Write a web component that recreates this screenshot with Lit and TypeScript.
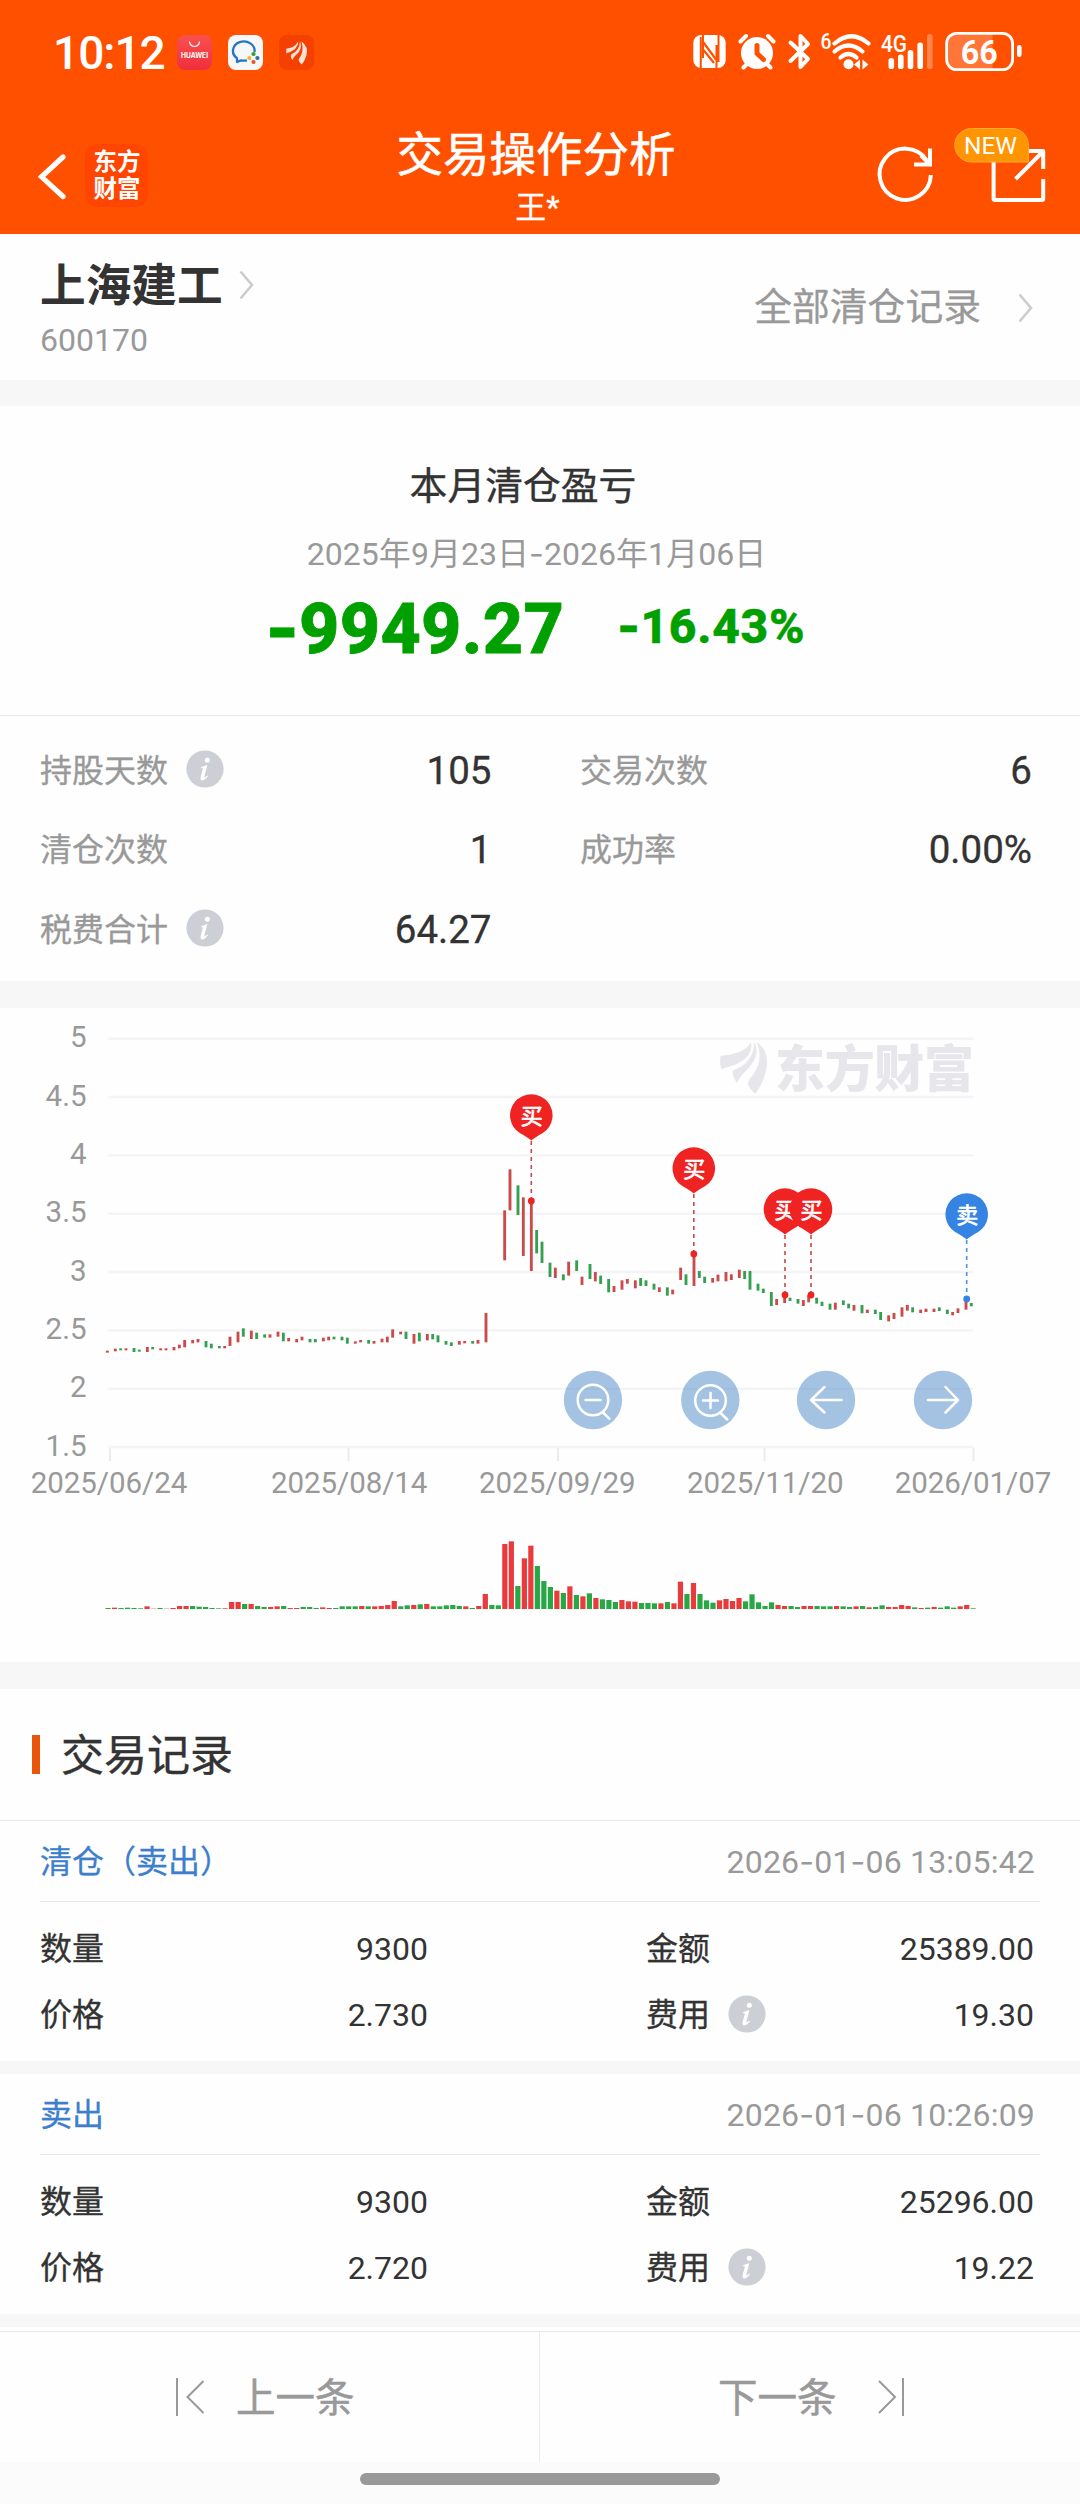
import { LitElement, html, css, svg } from "lit";
import { customElement, property } from "lit/decorators.js";

const FONT = css`Roboto, "Noto Sans CJK SC", sans-serif`;

/* Splits a string on hyphens so each one can be set in a wider face. */
const dashed = (text: string) =>
  text.split("-").map((part, i) => (i ? html`<span class="dash">-</span>${part}` : part));

const dashStyle = css`
  .dash { font-family: Inter, sans-serif; }
`;

/* One entry per trading day: colour, top, bottom (thirds of a pixel from the chart's 1020 line). */
const PRICES =
  "r992,998 r986,994 g985,991 r985,991 g984,996 g989,995 r981,996 g981,988 r985,991 r985,991 r981,991 r974,985 r960,982 r960,970 r957,967 g963,982 g971,985 g978,985 r978,985 r950,978 r935,967 g925,950 r932,957 g938,957 g943,953 r943,953 r935,950 g938,964 r954,964 r957,967 r950,961 g957,967 g957,967 r953,964 r950,961 g950,958 g950,961 g953,971 r964,971 r960,967 g960,971 r963,971 r956,967 r950,967 r928,953 r935,943 g935,957 r942,971 g938,964 r942,961 g942,958 g946,967 g963,974 g967,978 r963,974 r963,970 g963,971 r960,971 r879,967 r0,0 r0,0 r571,721 r448,571 g496,585 r532,708 r543,753 g630,700 g665,729 g728,771 r743,774 g763,781 r725,767 g721,753 r770,795 g732,777 r756,784 g767,792 g777,817 r798,816 r781,809 r777,791 r781,805 g774,798 g781,798 g791,809 r802,816 g802,827 r809,823 r743,780 g763,795 r703,798 g753,774 g770,789 r774,788 r764,784 r756,784 r763,780 r749,774 g753,777 g753,809 g791,812 g806,819 g816,858 r837,855 r825,849 g833,843 g837,851 r840,858 r825,847 g833,851 g845,858 g851,869 r848,869 g841,855 g851,865 r855,872 g855,880 r869,879 g869,882 g876,900 r886,904 r879,897 r862,890 r855,872 g862,877 r869,879 r866,876 r866,876 g862,873 g869,882 r876,886 r865,879 r845,869 g849,859";

/* One entry per trading day: colour and bar height in thirds of a pixel. */
const VOLUMES =
  "g3 r4 g3 g4 g3 g2 r8 r1 g3 r1 r3 r9 r9 g9 g7 g6 g3 g2 r2 r21 r21 g15 r15 g9 g6 r6 r8 g9 r3 r3 g6 g6 g3 r5 r3 g3 g8 g8 g8 r9 g8 r8 r9 r12 r24 g8 g11 r12 g14 r15 g8 g8 g11 g12 g9 r8 g3 r9 r45 g12 g11 r195 r203 g69 r152 r190 g129 g84 g66 r55 g48 r68 g42 r38 g47 r33 g29 g27 g21 r27 r23 r22 g18 g18 g17 r17 g21 r17 r82 g45 r78 g45 g26 g19 r26 r30 r24 r33 g23 g44 g20 g9 g20 r12 r9 g9 g6 r9 r9 g9 g8 g8 r9 g8 g6 r8 g9 r5 g6 g11 r6 r6 r12 r9 g5 r3 g4 r6 g4 g8 g4 r8 r12 g2";

const MARKS = [
  { x: 531.3, y: 1116, dot: 1201, label: "买", kind: "buy" },
  { x: 693.8, y: 1169, dot: 1254, label: "买", kind: "buy" },
  { x: 785, y: 1210, dot: 1295, label: "买", kind: "buy" },
  { x: 811, y: 1210, dot: 1295, label: "买", kind: "buy" },
  { x: 966.7, y: 1215, dot: 1299, label: "卖", kind: "sell" },
];

@customElement("info-dot")
export class InfoDot extends LitElement {
  static styles = css`
    :host { display: block; width: 38px; height: 38px; flex: none; }
    svg { display: block; }
  `;
  render() {
    return html`<svg width="38" height="38" viewBox="0 0 38 38">
      <circle cx="19" cy="19" r="18.6" fill="#ccd0d6" />
      <circle cx="21.3" cy="10.3" r="2.5" fill="#fff" />
      <path d="M15 17.2 L21.4 15 L18.4 26.4 Q18 28.8 21.4 25.6 L22 26.2 Q18 31 15.8 30.4 Q14 29.6 14.8 26.4 L16.8 19 Q17 17.8 15.2 18.2 Z" fill="#fff" />
    </svg>`;
  }
}

@customElement("status-bar")
export class StatusBar extends LitElement {
  static styles = css`
    :host { display: flex; align-items: center; height: 104px; padding: 0 56px 0 53px; font-family: ${FONT}; color: #fff; }
    .time { font-size: 46px; line-height: 1; font-weight: 500; width: 124px; letter-spacing: -1px; margin-top: 2px; }
    .apps { display: flex; gap: 16px; }
    svg { display: block; }
    .right { margin-left: auto; }
    .right text { font-family: ${FONT}; fill: #fff; }
  `;
  render() {
    return html`
      <div class="time">10:12</div>
      <div class="apps">
        <svg width="35" height="35" viewBox="0 0 35 35">
          <defs><linearGradient id="hw" x1="0" y1="0" x2="0" y2="1"><stop offset="0" stop-color="#fa5050" /><stop offset="1" stop-color="#ee2f3c" /></linearGradient></defs>
          <rect width="35" height="35" rx="8" fill="url(#hw)" />
          <path d="M12.5 6.5 a5 5 0 0 0 10 0" fill="none" stroke="#fff" stroke-width="1.2" />
          <text x="17.5" y="22.5" font-size="7" font-weight="700" font-family="Inter, sans-serif" text-anchor="middle" textLength="27" lengthAdjust="spacingAndGlyphs" fill="#fff">HUAWEI</text>
        </svg>
        <svg width="35" height="35" viewBox="0 0 35 35">
          <rect width="35" height="35" rx="8" fill="#f7f7f7" />
          <path d="M26.5 17 A10.8 9.4 0 1 0 9 23.2 L9 27 L13 25.4 Q16 26 19 25.4" fill="none" stroke="#2476c4" stroke-width="2.3" stroke-linejoin="round" />
          <circle cx="25.5" cy="19" r="2.1" fill="#3a9b35" /><circle cx="29.4" cy="23" r="2.1" fill="#2370bb" />
          <circle cx="25.5" cy="27" r="2.1" fill="#e2572b" /><circle cx="21.4" cy="23" r="2.1" fill="#f2b632" />
        </svg>
        <svg width="35" height="35" viewBox="0 0 35 35">
          <rect width="35" height="35" rx="8" fill="#f44000" />
          <path d="M7.2 13.8 Q15 13.4 19.3 6.6 Q19.4 14.6 7.4 18.6 Z M21 6.3 Q24 14 17.5 19.5 Q14 22.2 13.5 25 Q11 22 12.2 19.6 Q20.5 16 21 6.3 Z M22.6 6.5 Q30 12 27.4 20.5 Q25.5 26.5 22.8 29.6 Q19.2 26.5 19.8 24.3 Q25.5 17 22.6 6.5 Z" fill="#fde3d6" />
        </svg>
      </div>
      <svg class="right" width="334" height="44" viewBox="690 30 334 44">
        <rect x="693.3" y="35" width="32.4" height="33" rx="8" fill="#fff" />
        <path d="M703 35 V58 M700.8 37 V68 M716.5 45 V68 M718.5 35 V62" stroke="#ff5000" stroke-width="2" fill="none" />
        <path d="M703.5 42.5 L716 59.5 M703.5 50 L714 63" stroke="#ff5000" stroke-width="2.2" />
        <g fill="#fff" stroke="#fff">
          <circle cx="757" cy="53" r="16" stroke="none" />
          <path d="M740.5 41.5 L746 36 M773.5 41.5 L768 36 M747 64 L743.5 67.5 M767 64 L770.5 67.5" stroke-width="4" stroke-linecap="round" fill="none" />
        </g>
        <path d="M757 45.5 V53.5 L763.5 59.5" fill="none" stroke="#ff5000" stroke-width="5" stroke-linecap="round" stroke-linejoin="round" />
        <path d="M790.5 42.5 L808 59 L800.5 67 V36 L808 44 L790.5 61" fill="none" stroke="#fff" stroke-width="4" stroke-linecap="round" stroke-linejoin="round" />
        <text x="820.5" y="49" font-size="22" font-weight="500" textLength="11" lengthAdjust="spacingAndGlyphs">6</text>
        <g fill="none" stroke="#fff" stroke-width="4.2" stroke-linecap="round">
          <path d="M834.5 43.5 Q851.5 29 868.5 43.5" /><path d="M834.5 51.5 Q848.5 39.5 862.5 51.5" /><path d="M840.5 57.5 Q848.5 50.5 856.5 57.5" />
        </g>
        <circle cx="848.5" cy="64.3" r="5" fill="#fff" />
        <path d="M854 64.5 L860 59.5 V69.5 Z M868.5 64.5 L862.5 59.5 V69.5 Z" fill="#fff" />
        <text x="881" y="51.5" font-size="23.5" font-weight="500" textLength="26" lengthAdjust="spacingAndGlyphs">4G</text>
        <g fill="#fff">
          <rect x="888.5" y="58" width="5.6" height="11" rx="2.6" /><rect x="898" y="54.5" width="5.6" height="14.5" rx="2.6" />
          <rect x="907.7" y="50" width="5.6" height="19" rx="2.6" /><rect x="917.4" y="42.5" width="5.6" height="26.5" rx="2.6" />
          <rect x="927" y="34" width="5.6" height="35" rx="2.6" opacity=".3" />
          <path d="M955 34.5 H992.5 V69 H955 Q947 69 947 61 V42.5 Q947 34.5 955 34.5 Z" opacity=".22" />
          <rect x="1017" y="45" width="4.6" height="12" rx="2.2" />
        </g>
        <rect x="946.6" y="33.4" width="66" height="36.2" rx="10" fill="none" stroke="#fff" stroke-width="2.8" />
        <text x="979.3" y="64" font-size="33" font-weight="700" text-anchor="middle" textLength="37" lengthAdjust="spacingAndGlyphs">66</text>
      </svg>
    `;
  }
}

@customElement("title-bar")
export class TitleBar extends LitElement {
  static styles = css`
    :host { display: grid; grid-template-columns: 1fr 300px 1fr; height: 130px; font-family: ${FONT}; color: #fff; }
    svg { display: block; }
    .left { display: flex; align-items: flex-start; padding: 40px 0 0 38px; gap: 17px; }
    .back { margin-top: 8px; }
    .logo { box-sizing: border-box; width: 63px; height: 63px; border-radius: 13px; background: #ff4500; padding: 5px 0 0 1px; text-align: center; font-weight: 700; font-size: 23.5px; line-height: 26.5px; }
    .mid { text-align: center; line-height: 1; }
    .title { font-size: 46.5px; margin: 28px -10px 0 -18px; -webkit-text-stroke: 0.6px #fff; }
    .sub { font-size: 31px; margin: 13px 5px 0 0; -webkit-text-stroke: 0.3px #fff; }
    .right { display: flex; justify-content: flex-end; padding: 20px 30px 0 0; }
    .right text { font-family: ${FONT}; fill: #fff; }
  `;
  render() {
    return html`
      <div class="left">
        <svg class="back" width="30" height="50" viewBox="38 151 30 50"><path d="M63 156 L41.5 175.8 L63 195.5" fill="none" stroke="#fff" stroke-width="5.2" stroke-linecap="round" /></svg>
        <div class="logo">东方<br />财富</div>
      </div>
      <div class="mid"><div class="title">交易操作分析</div><div class="sub">王*</div></div>
      <div class="right">
        <svg width="180" height="90" viewBox="870 124 180 90">
          <g fill="none" stroke="#fff" stroke-width="4">
            <path d="M930.8 175 A25.6 25.6 0 1 1 926.5 160" /><path d="M930 148.5 V164.4 H914 M921 155.5 L930 164.4" />
            <path d="M993.6 160 V199 Q993.6 200 995 200 H1042 Q1043.2 200 1043.2 199 V179 M1026 151 H1043.2 V169 M1043 151.5 L1015.5 179" stroke-linejoin="round" />
          </g>
          <path d="M971.5 128.5 H1012 A16.5 16.5 0 0 1 1028.5 145 V162 H971.5 A16.7 16.7 0 0 1 971.5 128.5 Z" fill="#ff9500" stroke="#ffa93a" />
          <text x="990.5" y="153.8" font-size="23.5" text-anchor="middle" textLength="53" lengthAdjust="spacingAndGlyphs">NEW</text>
        </svg>
      </div>
    `;
  }
}

@customElement("trade-chart")
export class TradeChart extends LitElement {
  static styles = css`
    :host { display: block; }
    svg { display: block; }
    text { font-family: ${FONT}; }
    .axis { font-size: 29.5px; fill: #999; }
    .grid { stroke: #f4f4f6; stroke-width: 2.4; }
    .tick { stroke: #ececee; stroke-width: 2; }
    .brand { font-weight: 900; font-size: 50px; fill: #e6e6eb; }
    .r { fill: #cb4a4c; }
    .g { fill: #36a052; }
    .vr { fill: #e93a3c; }
    .vg { fill: #28a745; }
    .buy { fill: #f02323; }
    .sell { fill: #3583e2; }
    .buy-line { stroke: #c9484b; }
    .sell-line { stroke: #4f92dd; }
    .mark { fill: #fff; font-size: 22px; stroke: #fff; stroke-width: 0.7px; }
  `;
  render() {
    const rows = ["5", "4.5", "4", "3.5", "3", "2.5", "2", "1.5"];
    const dates: [string, number, number][] = [
      ["2025/06/24", 110, 109], ["2025/08/14", 348.5, 349.2], ["2025/09/29", 558, 557.3], ["2025/11/20", 764.5, 765.3], ["2026/01/07", 973.5, 973],
    ];
    return html`<svg width="1080" height="654" viewBox="0 1008 1080 654">
      ${rows.map((label, i) => {
        const y = 1038.7 + i * 58.33;
        return svg`<line class="grid" x1="108.5" x2="973" y1=${y} y2=${y} /><text class="axis" x="86.5" y=${y + 8.5} text-anchor="end">${label}</text>`;
      })}
      ${dates.map(([label, tick, x]) => svg`
        <line class="tick" x1=${tick} x2=${tick} y1="1448" y2="1461" />
        <text class="axis" x=${x} y="1493" text-anchor="middle" textLength="156.5" lengthAdjust="spacing">${label}</text>`)}
      <g transform="translate(700 1020) scale(.33333)" fill="#e6e6eb">
        <path d="M62 107 C105 105 138 93 153 67 C160 105 130 132 64 147 C59 130 60 118 62 107 Z" />
        <path d="M162 66 C180 95 165 125 140 150 C128 162 115 175 111 190 C102 175 97 165 98 153 C110 145 130 140 145 120 C158 103 163 85 162 66 Z" />
        <path d="M170 66 C203 88 205 125 197 155 C190 185 178 205 166 221 C152 208 144 200 144 188 C150 170 168 160 176 130 C181 110 179 88 170 66 Z" />
      </g>
      <text class="brand" x="775" y="1087" textLength="199" lengthAdjust="spacing">东方财富</text>
      <g transform="translate(80 1020) scale(.33333)">
        ${PRICES.split(" ").map((d, i) => {
          const [top, bottom] = d.slice(1).split(",").map(Number);
          const x = Math.round((81 + 19.5 * i) / 8) * 8 + 2;
          return bottom ? svg`<rect class=${d[0]} x=${x - 4.3} y=${top} width="8.6" height=${bottom - top} />` : null;
        })}
      </g>
      <g transform="translate(80 1500) scale(.33333)">
        ${VOLUMES.split(" ").map((d, i) => {
          const h = Number(d.slice(1));
          return svg`<rect class=${"v" + d[0]} x=${76.3 + 19.515 * i} y=${327 - h} width="15.6" height=${h} />`;
        })}
      </g>
      ${MARKS.map((m) => svg`
        <line class=${m.kind + "-line"} x1=${m.x} x2=${m.x} y1=${m.y + 25} y2=${m.dot} stroke-width="1.6" stroke-dasharray="4 4" />
        <circle class=${m.kind} cx=${m.x} cy=${m.dot} r="3.4" />
        <path class=${m.kind} d="M${m.x} ${m.y + 24.5} Q${m.x - 4} ${m.y + 21} ${m.x - 11.5} ${m.y + 17} A21.3 21 0 1 1 ${m.x + 11.5} ${m.y + 17} Q${m.x + 4} ${m.y + 21} ${m.x} ${m.y + 24.5} Z" />
        <text class="mark" x=${m.x + 0.5} y=${m.y + 8} text-anchor="middle">${m.label}</text>`)}
      ${[593, 710.3, 826, 943].map((x) => svg`<circle cx=${x} cy="1400" r="29.2" fill="#3f7fc4" fill-opacity=".47" />`)}
      <g fill="none" stroke="#fff" stroke-width="2.5" stroke-linecap="round" stroke-linejoin="round">
        <circle cx="593" cy="1400" r="15.3" /><path d="M585.5 1400 H600.5 M602.5 1412 L609.3 1418.7" />
        <circle cx="710.5" cy="1400.5" r="15.3" /><path d="M703 1400.5 H718 M710.5 1393 V1408 M720.5 1413 L727.3 1419.5" />
        <path d="M841.5 1400 H811 M824.5 1387 L811 1400 L824.5 1412.5" />
        <path d="M928 1400 H958 M945.5 1387 L958 1400 L945.5 1412.5" />
      </g>
    </svg>`;
  }
}

@customElement("trade-record")
export class TradeRecord extends LitElement {
  @property() kind = "";
  @property() time = "";
  @property() count = "";
  @property() amount = "";
  @property() price = "";
  @property() fee = "";
  static styles = [
    dashStyle,
    css`
      :host { display: block; box-sizing: border-box; height: 253px; background: #fefefe; border-bottom: 13px solid #f7f7f7; font-family: ${FONT}; font-size: 32px; line-height: 1; color: #333; white-space: nowrap; }
      .head { display: flex; align-items: center; justify-content: space-between; height: 81px; margin: 0 40px; border-bottom: 1px solid #e8e8e8; box-sizing: border-box; padding: 2px 5px 0 0; }
      .kind { color: #3d7fcc; -webkit-text-stroke: 0.3px #3d7fcc; }
      .time { color: #999; letter-spacing: 0.2px; }
      .rows { padding-top: 13px; }
      .row { display: grid; grid-template-columns: 160px 228px 218px 121px 1fr; align-items: center; height: 66px; padding: 0 46px 0 40px; }
      .label { -webkit-text-stroke: 0.3px #333; padding-top: 2px; }
      .value { text-align: right; padding-top: 1px; }
      .fee { grid-column: 4; display: flex; align-items: center; gap: 18px; }
    `,
  ];
  render() {
    const row = (a: string, b: string, c: string, d: string, info: boolean) => html`
      <div class="row">
        <span class="label">${a}</span><span class="value">${b}</span>
        <span class="fee"><span class="label">${c}</span>${info ? html`<info-dot></info-dot>` : null}</span>
        <span class="value">${d}</span>
      </div>`;
    return html`
      <div class="head"><span class="kind">${this.kind}</span><span class="time">${dashed(this.time)}</span></div>
      <div class="rows">
        ${row("数量", this.count, "金额", this.amount, false)}
        ${row("价格", this.price, "费用", this.fee, true)}
      </div>
    `;
  }
}

@customElement("app-root")
export class AppRoot extends LitElement {
  static styles = [
    dashStyle,
    css`
      :host { display: flex; flex-direction: column; width: 1080px; height: 2504px; overflow: hidden; background: #fefefe; font-family: ${FONT}; line-height: 1; color: #333; }
      svg { display: block; }
      .top { background: #ff5000; height: 234px; flex: none; }
      .stock { display: flex; justify-content: space-between; height: 146px; box-sizing: border-box; padding: 0 47px 0 40px; }
      .name-row { display: flex; align-items: center; gap: 16px; margin-top: 30px; }
      .name-row svg { margin-top: -4px; }
      .name { font-size: 45.7px; font-weight: 700; }
      .code { font-size: 32px; color: #999; margin-top: 14px; }
      .all { display: flex; align-items: center; gap: 37px; font-size: 37.8px; color: #999; height: 147px; }
      .all span { margin-top: 1px; -webkit-text-stroke: 0.3px #999; }
      .band { background: #f7f7f7; flex: none; }
      .b26 { height: 26px; } .b27 { height: 27px; }
      .pnl { height: 309px; display: flex; flex-direction: column; align-items: center; }
      .pnl-title { font-size: 37.8px; margin: 62px 34px 0 0; -webkit-text-stroke: 0.4px #333; }
      .pnl-date { font-size: 32px; color: #999; margin: 32px 7px 0 0; white-space: nowrap; letter-spacing: 0.05px; }
      .pnl-values { display: flex; align-items: center; gap: 53px; color: #00a000; font-weight: 800; margin: 23px 9px 0 0; white-space: nowrap; }
      .big { font-size: 70px; letter-spacing: 0.3px; -webkit-text-stroke: 0.8px #00a000; }
      .small { font-size: 48px; letter-spacing: 0.7px; margin-top: -3px; -webkit-text-stroke: 0.5px #00a000; }
      .stats { display: grid; grid-template-columns: 451.5px 452px; column-gap: 88.5px; grid-auto-rows: 79.5px; height: 266px; box-sizing: border-box; border-top: 1px solid #e8e8e8; padding: 15px 0 0 40px; }
      .stat { display: flex; align-items: center; font-size: 32px; color: #999; }
      .stat span { -webkit-text-stroke: 0.3px #999; }
      .stat info-dot { margin: -3px 0 0 18px; }
      .stat b { margin-left: auto; font-weight: 400; font-size: 38.5px; color: #333; -webkit-text-stroke: 0.3px #333; }
      .section { display: flex; align-items: center; gap: 21px; height: 132px; box-sizing: border-box; padding-left: 32px; border-bottom: 1px solid #e8e8e8; flex: none; }
      .section i { width: 8px; height: 39px; background: #e8560c; }
      .section span { font-size: 43px; margin-bottom: -4px; -webkit-text-stroke: 0.4px #333; }
      .nav { display: grid; grid-template-columns: 1fr 1fr; margin-top: 4px; height: 131px; border-top: 1px solid #e8e8e8; box-sizing: border-box; color: #999; font-size: 39.5px; flex: none; }
      .nav div { display: flex; align-items: center; }
      .nav span { margin-top: 3px; -webkit-text-stroke: 0.5px #999; }
      .prev { gap: 30px; padding-left: 175px; border-right: 1px solid #ececec; }
      .next { gap: 40px; padding-left: 178px; }
      .foot { flex: 1; background: #fbfbfb; display: flex; justify-content: center; align-items: flex-start; }
      .home { width: 360px; height: 12px; border-radius: 6px; background: #999; margin-top: 11px; }
    `,
  ];
  private chevron() {
    return html`<svg width="15" height="30" viewBox="0 0 15 30"><path d="M1.5 1.5 L13 15 L1.5 28.5" fill="none" stroke="#ccc" stroke-width="2.6" /></svg>`;
  }
  render() {
    const stats: [string, string, boolean][] = [
      ["持股天数", "105", true], ["交易次数", "6", false], ["清仓次数", "1", false], ["成功率", "0.00%", false], ["税费合计", "64.27", true],
    ];
    return html`
      <div class="top"><status-bar></status-bar><title-bar></title-bar></div>
      <div class="stock">
        <div><div class="name-row"><span class="name">上海建工</span>${this.chevron()}</div><div class="code">600170</div></div>
        <div class="all"><span>全部清仓记录</span>${this.chevron()}</div>
      </div>
      <div class="band b26"></div>
      <div class="pnl">
        <div class="pnl-title">本月清仓盈亏</div>
        <div class="pnl-date">${dashed("2025年9月23日-2026年1月06日")}</div>
        <div class="pnl-values"><span class="big">${dashed("-9949.27")}</span><span class="small">${dashed("-16.43%")}</span></div>
      </div>
      <div class="stats">
        ${stats.map(([label, value, info]) => html`<div class="stat"><span>${label}</span>${info ? html`<info-dot></info-dot>` : null}<b>${value}</b></div>`)}
      </div>
      <div class="band b27"></div>
      <trade-chart></trade-chart>
      <div class="band b27"></div>
      <div class="section"><i></i><span>交易记录</span></div>
      <trade-record kind="清仓（卖出）" time="2026-01-06 13:05:42" count="9300" amount="25389.00" price="2.730" fee="19.30"></trade-record>
      <trade-record kind="卖出" time="2026-01-06 10:26:09" count="9300" amount="25296.00" price="2.720" fee="19.22"></trade-record>
      <div class="nav">
        <div class="prev"><svg width="31" height="38" viewBox="0 0 31 38"><path d="M2 0 V38 M28.5 3 L12.5 19 L28.5 35" fill="none" stroke="#999" stroke-width="2" /></svg><span>上一条</span></div>
        <div class="next"><span>下一条</span><svg width="28" height="38" viewBox="0 0 28 38"><path d="M26 0 V38 M2 3 L18 19 L2 35" fill="none" stroke="#999" stroke-width="2" /></svg></div>
      </div>
      <div class="foot"><div class="home"></div></div>
    `;
  }
}
